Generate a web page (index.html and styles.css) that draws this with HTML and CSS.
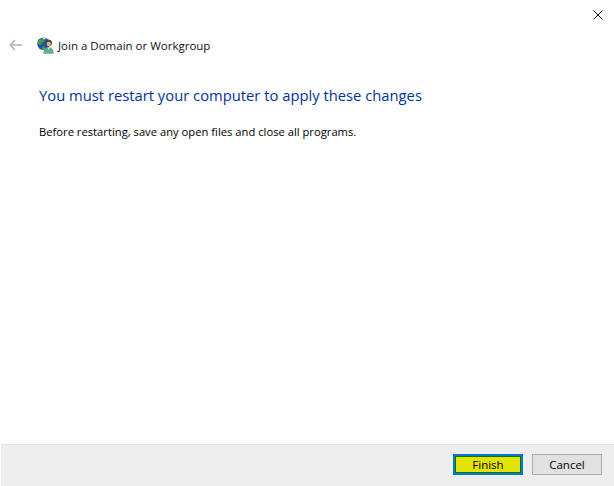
FILE: index.html
```html
<!DOCTYPE html>
<html lang="en">
<head>
<meta charset="utf-8">
<title>Join a Domain or Workgroup</title>
<link rel="stylesheet" href="styles.css">
</head>
<body>
<div class="window">
  <div class="titlebar">
    <svg class="close" width="10" height="10" viewBox="0 0 10 10"><path d="M.5.5l9 9M9.500.5l-9 9" stroke="#111" stroke-width="1" fill="none"/></svg>
  </div>
  <div class="nav">
    <svg class="back" width="13" height="12" viewBox="0 0 13 12"><path d="M6 1L1.200 6l4.800 5M1.200 6H13" stroke="#b4b4b4" stroke-width="1.600" fill="none"/></svg>
    <svg class="app-icon" width="17" height="17" viewBox="0 0 17 17">
      <circle cx="6.500" cy="6.800" r="6.300" fill="#1f55ad"/>
      <path d="M1.500 3.500c2-2 4.500-1.500 5.500-.5s-1 2.500-2 3-1 2.500-2.500 2S.5 5 1.500 3.500zM6 9.500c1.500-.5 2.500.5 2 2s-1.500 1.500-2.500 1.200-.5-2.700.5-3.200z" fill="#3fa33f"/>
      <path d="M5 .9c1.500-.5 3.200-.2 4.300.6l-2.300 1.300z" fill="#bcd9f5"/>
      <circle cx="11.700" cy="6" r="3.300" fill="#54452f"/>
      <circle cx="11.800" cy="6.900" r="2.200" fill="#d9ae8a"/>
      <path d="M6.300 16.800c0-4.400 2.200-6.500 5.200-6.500s5.200 2.100 5.200 6.500z" fill="#63ab91"/>
      <path d="M10.500 10.400h2l-1 2.500z" fill="#e3f1ea"/>
    </svg>
    <span class="nav-title">Join a Domain or Workgroup</span>
  </div>
  <main class="content">
    <h1 class="heading">You must restart your computer to apply these changes</h1>
    <p class="message">Before restarting, save any open files and close all programs.</p>
  </main>
  <div class="footer">
    <button class="btn btn-primary" type="button">Finish</button>
    <button class="btn" type="button">Cancel</button>
  </div>
</div>
</body>
</html>
```
FILE: styles.css
```css
* { box-sizing: border-box; }
html, body { margin: 0; height: 100%; }
body { background: #fff; font-family: "Open Sans", "Noto Sans", sans-serif; color: #000; }
.window { display: flex; flex-direction: column; width: 614px; height: 486px; overflow: hidden; }
.titlebar { display: flex; justify-content: flex-end; height: 30px; padding: 10px 11px 0 0; }
.close { display: block; }
.nav { display: flex; align-items: center; height: 30px; padding-left: 9px; }
.back { margin-right: 15px; }
.app-icon { margin-right: 4px; }
.nav-title { font-size: 11.5px; color: #111; }
.content { flex: 1; padding: 0 0 0 39px; }
.heading { margin: 25px 0 0; font-size: 14.77px; line-height: 20px; font-weight: 400; color: #003399; }
.message { margin: 19px 0 0; font-size: 11.22px; line-height: 16px; }
.footer { display: flex; justify-content: flex-end; gap: 9px; height: 42px; margin-left: 1px; padding: 9px 12px 0 0; background: #eeeeee; border-top: 1px solid #dfdfdf; }
.btn { width: 70px; height: 21px; padding: 0; font: 11.5px "Open Sans", "Noto Sans", sans-serif; color: #000; background: #e1e1e1; border: 1px solid #adadad; }
.btn-primary { background: #e3e300; border: 2px solid #0078d7; outline: 1px solid #007a00; outline-offset: -3px; }
```
